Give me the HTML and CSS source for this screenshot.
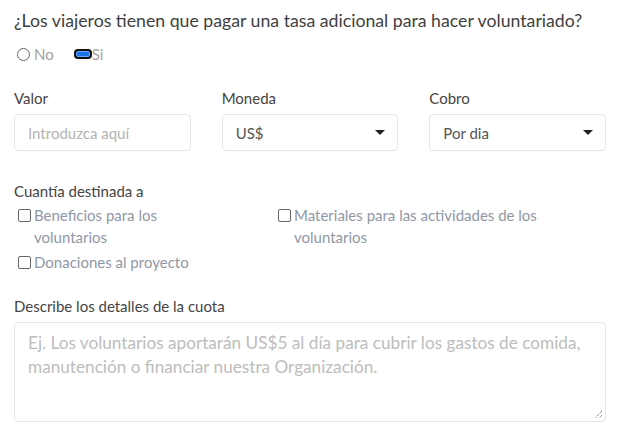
FILE: index.html
```html
<html lang="es">
  <head>
    <meta charset="UTF-8" />
    <meta name="viewport" content="width=device-width, initial-scale=1.0" />
    <title>Tasa de voluntariado</title>
    <link rel="stylesheet" href="styles.css">
  </head>
  <body>
    <form class="fee-form">
      <p class="question">¿Los viajeros tienen que pagar una tasa adicional para hacer voluntariado?</p>
      <div class="radio-row">
        <label class="radio"><span class="radio-dot"></span>No</label>
        <label class="radio"><span class="radio-dot checked"></span>Si</label>
      </div>

      <div class="fields">
        <div class="field">
          <label class="field-label">Valor</label>
          <div class="box placeholder">Introduzca aquí</div>
        </div>
        <div class="field">
          <label class="field-label">Moneda</label>
          <div class="box select">US$<span class="caret"></span></div>
        </div>
        <div class="field">
          <label class="field-label">Cobro</label>
          <div class="box select">Por dia<span class="caret"></span></div>
        </div>
      </div>

      <p class="field-label group-title">Cuantía destinada a</p>
      <div class="checks">
        <label class="check"><span class="check-box"></span><span>Beneficios para los voluntarios</span></label>
        <label class="check"><span class="check-box"></span><span>Materiales para las actividades de los voluntarios</span></label>
        <label class="check"><span class="check-box"></span><span>Donaciones al proyecto</span></label>
      </div>

      <p class="field-label details-title">Describe los detalles de la cuota</p>
      <div class="textarea">
        <span class="placeholder-big">Ej. Los voluntarios aportarán US$5 al día para cubrir los gastos de comida, manutención o financiar nuestra Organización.</span>
        <svg class="grip" width="10" height="10" viewBox="0 0 10 10">
          <path d="M9 2 L2 9 M9 6 L6 9" stroke="#555" stroke-width="1" stroke-dasharray="1 1" fill="none" />
        </svg>
      </div>
    </form>
  </body>
</html>
```

FILE: styles.css
```css
body {
  font-family: Lato, "Open Sans", sans-serif;
  background-color: #ffffff;
  margin: 0;
  color: #4a4a4a;
}
.fee-form {
  padding: 0 16px 0 14px;
}
.question {
  font-size: 17.7px;
  margin: 10px 0 0;
  line-height: 22px;
  color: #3f3f3f;
}
.radio-row {
  display: flex;
  gap: 20px;
  margin-top: 12px;
  height: 20px;
  align-items: center;
}
.radio {
  display: flex;
  align-items: center;
  font-size: 15px;
  color: #a3a3a3;
}
.radio-dot {
  width: 11px;
  height: 11px;
  border: 1px solid #666;
  border-radius: 50%;
  margin: 0 4px 0 3px;
}
.radio-dot.checked {
  width: 14px;
  height: 6px;
  border: 2px solid #111;
  border-radius: 4px;
  background-color: #1a73e8;
  margin: 0;
  box-shadow: inset 0 0 0 1px #6aa6ff;
}
.fields {
  display: grid;
  grid-template-columns: repeat(3, 1fr);
  column-gap: 31px;
  margin-top: 24px;
}
.field-label {
  display: block;
  font-size: 15px;
  line-height: 20px;
  color: #444;
  margin: 0 0 6px;
}
.box {
  height: 37px;
  box-sizing: border-box;
  border: 1px solid #e3e5ea;
  border-radius: 4px;
  padding: 0 13px;
  display: flex;
  align-items: center;
  font-size: 15px;
  color: #555;
}
.box.placeholder {
  color: #b3b3b3;
}
.select {
  justify-content: space-between;
}
.caret {
  width: 0;
  height: 0;
  border-left: 5px solid transparent;
  border-right: 5px solid transparent;
  border-top: 5px solid #222;
  margin-right: -1px;
}
.group-title {
  margin-top: 30px;
  margin-bottom: 3px;
}
.checks {
  display: grid;
  grid-template-columns: 200px 300px;
  column-gap: 60px;
  row-gap: 3px;
}
.check {
  display: flex;
  align-items: flex-start;
  font-size: 15px;
  line-height: 22px;
  color: #8f97a6;
}
.check-box {
  flex: none;
  width: 11px;
  height: 11px;
  border: 1px solid #666;
  border-radius: 2px;
  margin: 5px 3px 0 4px;
}
.details-title {
  margin-top: 23px;
  margin-bottom: 6px;
}
.textarea {
  position: relative;
  height: 100px;
  box-sizing: border-box;
  border: 1px solid #e3e5ea;
  border-radius: 4px;
  padding: 8px 13px;
  font-size: 17.2px;
  line-height: 24px;
  color: #bdbdbd;
}
.grip {
  position: absolute;
  right: 2px;
  bottom: 2px;
}
```
